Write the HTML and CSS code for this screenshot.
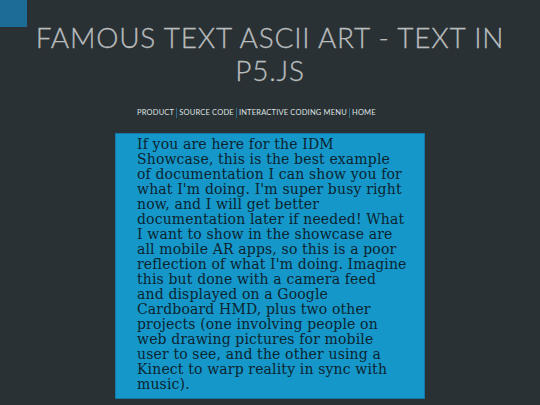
FILE: index.html
```html
<!DOCTYPE html>
<html>
<head>
<meta charset="utf-8">
<link rel="stylesheet" href="styles.css">
</head>
<body>
<div class="corner"></div>
<header class="header">
  <h1 class="title">Famous Text ASCII Art - Text in p5.js</h1>
  <nav class="nav">
    <a class="nav-link">Product</a><span class="sep"></span><a class="nav-link">Source Code</a><span class="sep"></span><a class="nav-link">Interactive Coding Menu</a><span class="sep"></span><a class="nav-link">Home</a>
  </nav>
</header>
<main class="content">
  <p class="doc">If you are here for the IDM<br>Showcase, this is the best example<br>of documentation I can show you for<br>what I'm doing. I'm super busy right<br>now, and I will get better<br>documentation later if needed! What<br>I want to show in the showcase are<br>all mobile AR apps, so this is a poor<br>reflection of what I'm doing. Imagine<br>this but done with a camera feed<br>and displayed on a Google<br>Cardboard HMD, plus two other<br>projects (one involving people on<br>web drawing pictures for mobile<br>user to see, and the other using a<br>Kinect to warp reality in sync with<br>music).</p>
</main>
</body>
</html>
```
FILE: styles.css
```css
html, body {
  margin: 0;
  padding: 0;
}
body {
  width: 540px;
  height: 405px;
  overflow: hidden;
  background: #293134;
  position: relative;
}
.corner {
  position: absolute;
  left: 0;
  top: 0;
  width: 27px;
  height: 27px;
  background: #1d6b97;
}
.header {
  display: flex;
  flex-direction: column;
  align-items: center;
}
.title {
  margin: 21px 0 0;
  width: 490px;
  text-align: center;
  font-family: "Lato", sans-serif;
  font-weight: 300;
  font-size: 28px;
  line-height: 33px;
  letter-spacing: 0.8px;
  text-transform: uppercase;
  color: #b9bcbd;
  -webkit-text-stroke: 0.3px #b9bcbd;
}
.nav {
  margin-top: 20px;
  align-self: flex-start;
  margin-left: 137px;
  display: flex;
  align-items: center;
  height: 11px;
  font-family: "Lato", sans-serif;
  font-size: 7.5px;
  letter-spacing: 0.2px;
  text-transform: uppercase;
  color: #dfe2e3;
}
.sep {
  width: 1px;
  height: 10px;
  background: #2f6a86;
  margin: 0 2px;
}
.content {
  display: flex;
  justify-content: center;
  margin-top: 15px;
}
.doc {
  margin: 0;
  width: 268px;
  padding: 3px 19px 6px 21px;
  background: #1597c9;
  border: 1px solid #1479a6;
  font-family: "DejaVu Serif", serif;
  font-size: 14px;
  line-height: 15px;
  letter-spacing: 0.15px;
  white-space: nowrap;
  color: #0c2430;
}
```
